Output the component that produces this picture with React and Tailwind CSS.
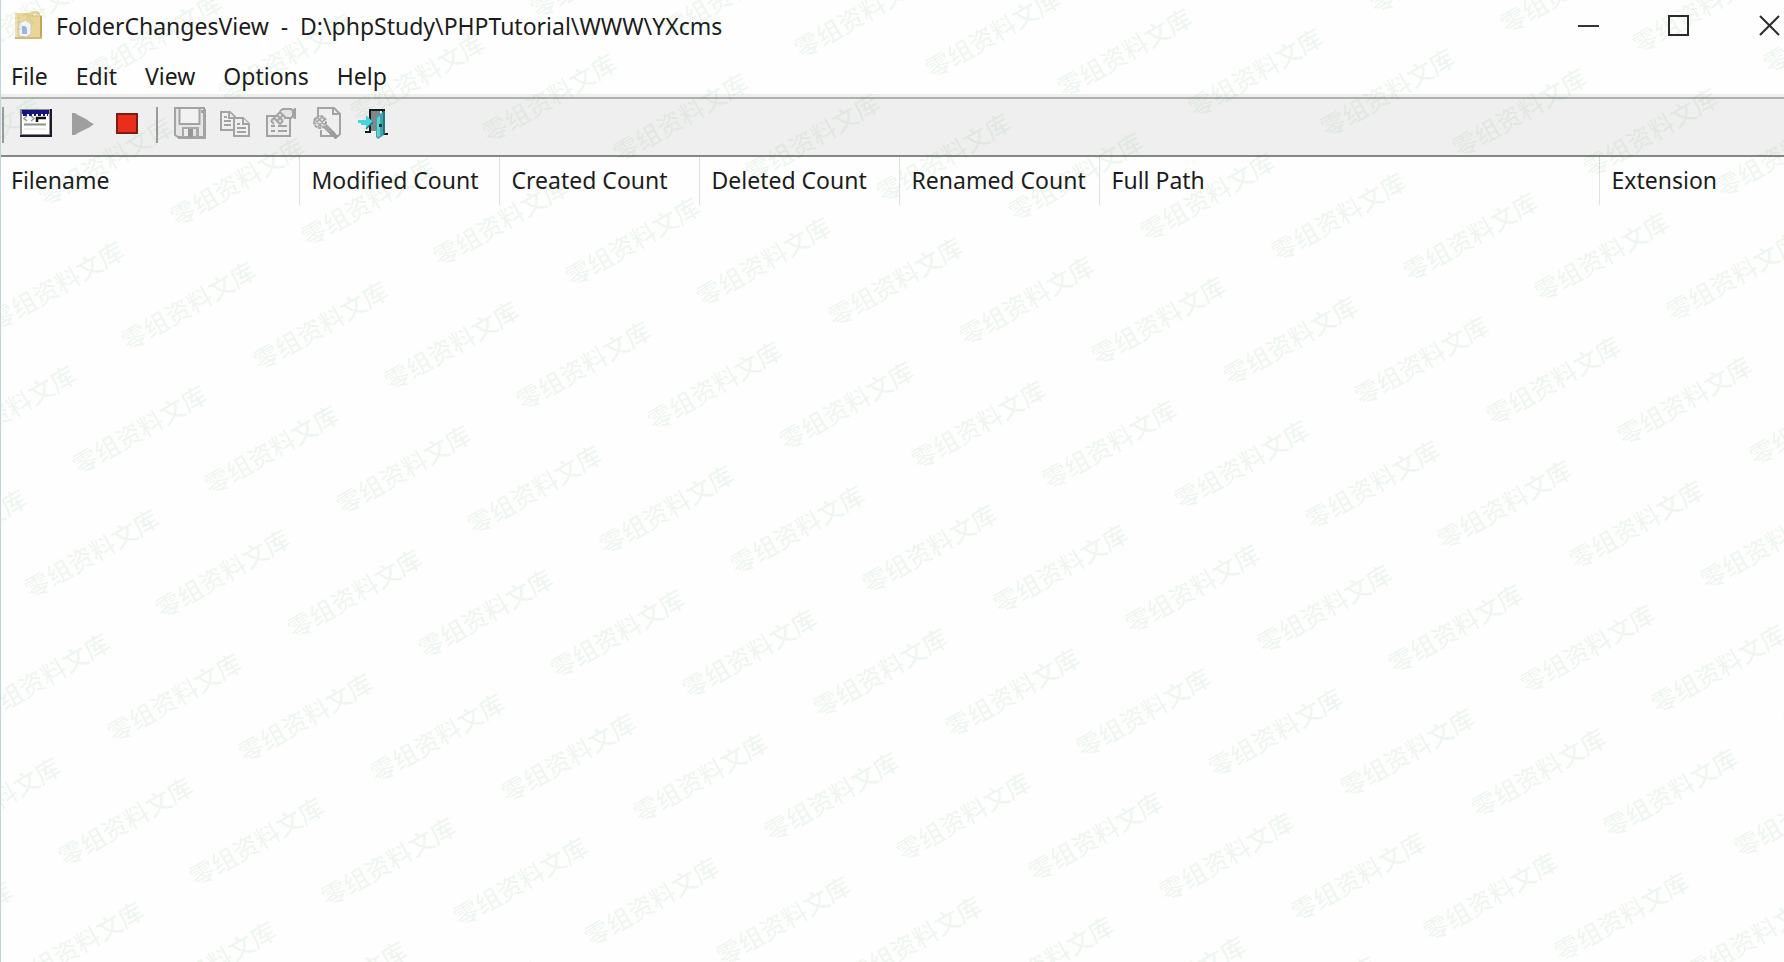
import React from "react";

const GRAY = "#a3a3a3";

function AppIcon() {
  return (
    <svg viewBox="0 0 32 32" className="size-8" aria-hidden="true">
      <path d="M3 3h14l2-1 2-1h5l2 3v1h2v24H3z" fill="#ead596" />
      <path d="M3 3h2v26H3z" fill="#efe3bd" />
      <path d="M28 6h2v23h-2z" fill="#c9a552" />
      <path d="M3 27h27v2H3z" fill="#d2b87c" />
      <path d="M21 3h5l2 3h-8z" fill="#f7eed2" stroke="#d9c48b" />
      <path d="M7 13l7-3 5 4v10l-5 3-7-1z" fill="#f2f4f6" stroke="#cfcbbd" />
      <path d="M10 16h3l2 2v6h-5z" fill="#9db8dc" />
    </svg>
  );
}

function WindowIcon() {
  return (
    <svg viewBox="0 0 32 32" className="size-8" aria-hidden="true">
      <rect x="0" y="2" width="32" height="28" fill="#1c1c26" />
      <rect x="0" y="2" width="30" height="26" fill="#8a8a92" />
      <rect x="2" y="4" width="27" height="23" fill="#fff" />
      <rect x="2" y="3" width="27" height="4" fill="#14147c" />
      <path d="M3 8h4M9 8h3M14 8h2M18 8h3M23 8h2M27 8h1" stroke="#14147c" strokeWidth="2" />
      <path d="M7 9l-3 2.500 3 2.500M11 9l3 2.500-3 2.500" fill="none" stroke="#9a9aa2" strokeWidth="1.500" />
      <path d="M17 15v-4h9" fill="none" stroke="#111" strokeWidth="2.500" />
      <path d="M4 17.500h22" stroke="#8d8d8d" strokeWidth="2" />
      <path d="M4 22h22" stroke="#dcdcdc" strokeWidth="1" />
    </svg>
  );
}

function PlayIcon() {
  return (
    <svg viewBox="0 0 32 32" className="size-8" aria-hidden="true">
      <path d="M6 6h3l3 2 4 2 4 2 4 3 4 2-4 3-4 2-4 2-4 2-3 2H6z" fill="#9f9f9f" />
    </svg>
  );
}

function StopIcon() {
  return (
    <svg viewBox="0 0 32 32" className="size-8" aria-hidden="true">
      <rect x="5" y="7" width="20" height="19" fill="#e92e1b" stroke="#7c1d14" strokeWidth="2" />
    </svg>
  );
}

function SaveIcon() {
  return (
    <svg viewBox="0 0 32 32" className="size-8" aria-hidden="true">
      <path d="M1 1h29v29H4l-3-2z" fill="#e6e6e6" stroke={GRAY} strokeWidth="2" />
      <path d="M29 2h3v30H4v-3h25z" fill={GRAY} />
      <rect x="5.500" y="1" width="20" height="16" fill="#f2f2f2" stroke={GRAY} strokeWidth="2" />
      <rect x="27" y="3" width="2" height="3" fill={GRAY} />
      <rect x="8" y="20" width="17" height="10" fill="#a9a9a9" />
      <rect x="10" y="22" width="4" height="7" fill="#ececec" />
      <rect x="14" y="22" width="5" height="8" fill="#969696" />
      <rect x="19" y="22" width="3" height="7" fill="#e2e2e2" />
    </svg>
  );
}

function CopyIcon() {
  return (
    <svg viewBox="0 0 32 32" className="size-8" aria-hidden="true">
      <g fill="#f0f0f0" stroke={GRAY} strokeWidth="2">
        <path d="M1 5h9l5 5v13H1z" />
        <path d="M9 5v6h6M4 10h3M4 14h7M4 18h7" />
        <path d="M14 11h9l6 6v12H14z" />
        <path d="M23 11v6h6M17 17h3M17 21h9M17 25h9" />
      </g>
    </svg>
  );
}

function PropertiesIcon() {
  return (
    <svg viewBox="0 0 32 32" className="size-8" aria-hidden="true">
      <path d="M1 9h23v20H1z" fill="#ededed" stroke={GRAY} strokeWidth="2" />
      <path d="M5 19h4M12 19h9M5 24h4M12 24h9" stroke={GRAY} strokeWidth="2" />
      <path d="M5 13l9-9 3-2h9v9h-6l-7 6z" fill="#e4e4e4" />
      <path d="M14 4l3-2h8l2 2v5l-2 2h-7M27 3h3M29 1v11M27 10h3" fill="none" stroke={GRAY} strokeWidth="2" />
      <path d="M5 14l3-3 3 3 3-3 3 3M8 11l3-3 3 3 3-3 3 3M11 8l3-3 3 3M5 14l3 3M11 14l3 3 3-3" fill="none" stroke={GRAY} strokeWidth="1.800" />
    </svg>
  );
}

function FindIcon() {
  return (
    <svg viewBox="0 0 32 32" className="size-8" aria-hidden="true">
      <path d="M6 9V1h16l6 6v20l-2 2H9v-6" fill="#efefef" stroke={GRAY} strokeWidth="2" />
      <path d="M21 2v5h6" fill="none" stroke={GRAY} strokeWidth="2" />
      <circle cx="8" cy="15" r="6" fill="#e2e2e2" stroke={GRAY} strokeWidth="2" strokeDasharray="3 1" />
      <path d="M3 13l7 7M5 10l8 8M9 9l4 4M13 12l-7 8M11 9l-8 8M6 10l-4 4" stroke={GRAY} strokeWidth="1.300" />
      <path d="M13 19l9 9" stroke={GRAY} strokeWidth="5" />
      <path d="M19 25l6 6" stroke="#9a9a9a" strokeWidth="4" />
    </svg>
  );
}

function ExitIcon() {
  return (
    <svg viewBox="0 0 32 32" className="size-8" aria-hidden="true">
      <path d="M11 2h16v24h3v2h-6V4H13v22H7v-2h4z" fill="#15191b" />
      <path d="M13 4h9v20h-9z" fill="#7f8788" />
      <path d="M18 10l8-6v24l-6 4-2-2z" fill="#3ea6ab" />
      <path d="M19 11l3-2v20l-3 1z" fill="#68cdd1" />
      <path d="M25 4h2v23l-2 1z" fill="#23767c" />
      <path d="M21 17h3v3h-3z" fill="#123a3d" />
      <path d="M0 13h8V8l7 7-7 7v-4H3v-2H0z" fill="#46d5e0" />
      <path d="M8 22l7-7" stroke="#167a82" strokeWidth="1.500" />
    </svg>
  );
}

const TOOLS = [
  [
    { label: "Choose folders", Icon: WindowIcon },
    { label: "Start monitoring", Icon: PlayIcon, disabled: true },
    { label: "Stop monitoring", Icon: StopIcon },
  ],
  [
    { label: "Save selected items", Icon: SaveIcon, disabled: true },
    { label: "Copy selected items", Icon: CopyIcon, disabled: true },
    { label: "Properties", Icon: PropertiesIcon, disabled: true },
    { label: "Find", Icon: FindIcon, disabled: true },
    { label: "Exit", Icon: ExitIcon },
  ],
];

const COLUMNS = [
  { name: "Filename", width: "w-[298px]" },
  { name: "Modified Count", width: "w-[200px]" },
  { name: "Created Count", width: "w-[200px]" },
  { name: "Deleted Count", width: "w-[200px]" },
  { name: "Renamed Count", width: "w-[200px]" },
  { name: "Full Path", width: "w-[500px]" },
  { name: "Extension", width: "" },
];

// Stamps sit on a slanted lattice that covers the whole window.
const STAMPS = [];
for (let row = -4; row < 10; row++) {
  for (let col = -4; col < 18; col++) {
    const x = Math.round(187 + col * 131.6 - row * 48.7);
    const y = Math.round(305 + col * 19.9 + row * 124);
    if (x > -80 && x < 2000 && y > -60 && y < 1100) STAMPS.push({ x, y });
  }
}

function Watermark() {
  return (
    <div aria-hidden="true" className="pointer-events-none absolute inset-0 overflow-hidden select-none">
      {STAMPS.map(({ x, y }) => (
        <span
          key={`${x},${y}`}
          style={{ left: x, top: y }}
          className="absolute -translate-1/2 -rotate-30 font-['Noto_Sans_CJK_SC',sans-serif] text-[25px] leading-none font-medium whitespace-nowrap text-[#108020]/8"
        >
          零组资料文库
        </span>
      ))}
    </div>
  );
}

export default function App() {
  return (
    <div className="relative flex min-h-screen flex-col overflow-hidden border-l border-[#c3d5dc] bg-[#fefefe] font-['Noto_Sans','Open_Sans',sans-serif] text-[23px] leading-8 text-[#1c1c1c]">
      <header className="flex h-[50px] items-center">
        <div className="flex flex-1 items-center gap-3 pt-0.5 pl-[11px]">
          <AppIcon />
          <h1 className="whitespace-pre">{"FolderChangesView  -  D:\\phpStudy\\PHPTutorial\\WWW\\YXcms"}</h1>
        </div>
        <button type="button" aria-label="Minimize" className="flex h-full w-[90px] items-center justify-center">
          <svg viewBox="0 0 21 21" className="size-[21px]" aria-hidden="true">
            <path d="M0 11h21" stroke="#333" strokeWidth="2" />
          </svg>
        </button>
        <button type="button" aria-label="Maximize" className="flex h-full w-[90px] items-center justify-center">
          <svg viewBox="0 0 21 21" className="size-[21px]" aria-hidden="true">
            <rect x="1" y="1" width="19" height="19" fill="none" stroke="#2a2a2a" strokeWidth="2" />
          </svg>
        </button>
        <button type="button" aria-label="Close" className="flex h-full w-[61px] items-center justify-end pr-1">
          <svg viewBox="0 0 21 21" className="size-[21px]" aria-hidden="true">
            <path d="M1 1l19 19M20 1L1 20" stroke="#2a2a2a" strokeWidth="2" />
          </svg>
        </button>
      </header>

      <nav className="flex h-11 items-end gap-7 pb-0.5 pl-2.5">
        {["File", "Edit", "View", "Options", "Help"].map((item) => (
          <button key={item} type="button">
            {item}
          </button>
        ))}
      </nav>

      <div role="toolbar" aria-label="Main toolbar" className="border-t-3 border-[#efefef]">
        <div className="flex h-[60px] items-start border-t-2 border-b-2 border-t-[#b0b0b0] border-b-[#848683] bg-[#efefef] pt-2">
          {TOOLS.map((group, index) => (
            <div key={index} className="flex">
              <div className={index === 0 ? "mr-4 ml-px h-9 w-0.5 bg-[#9c9c9c]" : "mr-4 ml-3 h-9 w-0.5 bg-[#9c9c9c]"} />
              <div className="flex gap-3.5">
                {group.map(({ label, Icon, disabled }) => (
                  <button key={label} type="button" aria-label={label} disabled={disabled} className="size-8">
                    <Icon />
                  </button>
                ))}
              </div>
            </div>
          ))}
        </div>
      </div>

      <table className="w-full table-fixed">
        <thead>
          <tr>
            {COLUMNS.map(({ name, width }) => (
              <th
                key={name}
                scope="col"
                className={`h-12 border-r border-[#e0e0e0] pb-0.5 pl-3 text-left font-normal whitespace-nowrap last:border-r-0 first:pl-2.5 ${width}`}
              >
                {name}
              </th>
            ))}
          </tr>
        </thead>
      </table>

      <Watermark />
    </div>
  );
}
